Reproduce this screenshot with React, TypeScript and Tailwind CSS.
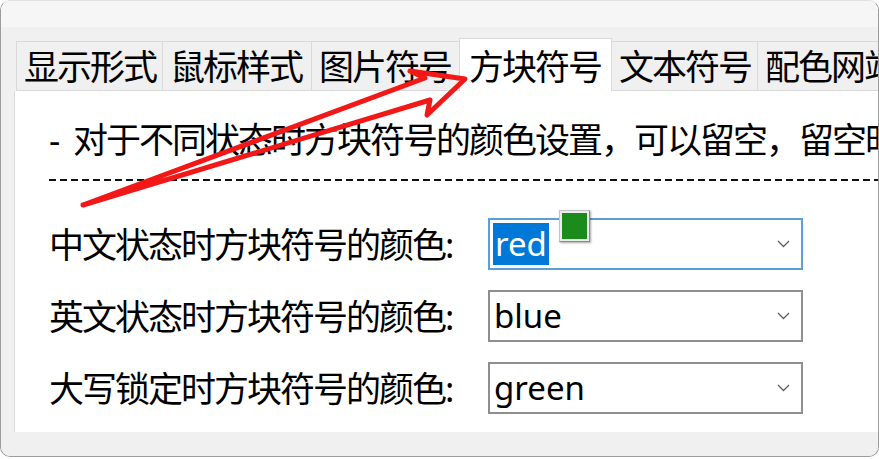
const tabs = [
  { label: "显示形式", cls: "w-[147px] border-l" },
  { label: "鼠标样式", cls: "w-[149px]" },
  { label: "图片符号", cls: "w-[148px]" },
  { label: "方块符号", cls: "active" },
  { label: "文本符号", cls: "w-[146px]" },
  { label: "配色网站", cls: "w-[148px]" },
];

const rows = [
  { label: "中文状态时方块符号的颜色:", value: "red", focused: true },
  { label: "英文状态时方块符号的颜色:", value: "blue", focused: false },
  { label: "大写锁定时方块符号的颜色:", value: "green", focused: false },
];

function Chevron() {
  return (
    <svg width="13" height="8" viewBox="0 0 13 8" className="ml-auto shrink-0">
      <polyline points="1,1 6.5,6.5 12,1" fill="none" stroke="#5f5f5f" strokeWidth="1.3" />
    </svg>
  );
}

function Combo({ value, focused }: { value: string; focused: boolean }) {
  return (
    <div
      className={
        focused
          ? "relative flex h-[52px] w-[315px] shrink-0 items-center border-2 border-[#5b9fd9] bg-white pl-[3px] pr-[11px]"
          : "relative flex h-[52px] w-[315px] shrink-0 items-center border-2 border-[#8f8f8f] bg-white pl-[4px] pr-[11px]"
      }
    >
      {focused ? (
        <span className="bg-[#0078d7] px-[2px] text-[33px] leading-[42px] text-white">{value}</span>
      ) : (
        <span className="text-[33px] leading-[42px]">{value}</span>
      )}
      {focused && (
        <div className="absolute -top-[10px] left-[69px] h-[32px] w-[31px] border border-[#c4c4c4] border-b-[#8a8a8a] border-r-[#8a8a8a] bg-[#ececec] p-[2px] shadow-[1px_1px_2px_rgba(0,0,0,0.35)]">
          <div className="h-full w-full bg-[#1b8c1b]" />
        </div>
      )}
      <Chevron />
    </div>
  );
}

export default function App() {
  return (
    <div className="relative h-[459px] w-[879px] bg-white font-['Noto_Sans','Noto_Sans_CJK_SC',sans-serif] text-black">
      <div className="flex h-[457px] flex-col overflow-hidden rounded-[10px] border border-[#9c9c9c] border-t-[#e2e2e2] bg-[#f0f0f0]">
        <div className="h-[26px] shrink-0 bg-[#f6f6f6]" />
        <div className="flex min-h-0 flex-1 flex-col pl-[13px] pt-[11px]">
          {/* tab strip */}
          <div className="flex h-[53px] shrink-0 items-end overflow-hidden pl-[2px]">
            {tabs.map((t) =>
              t.cls === "active" ? (
                <div
                  key={t.label}
                  className="-ml-[1px] flex h-[53px] w-[153px] shrink-0 items-center whitespace-nowrap border-x border-t border-[#d9d9d9] bg-white pl-[9px] pt-[3px] text-[35px] leading-none tracking-[-2px]"
                >
                  {t.label}
                </div>
              ) : (
                <div
                  key={t.label}
                  className={`flex h-[50px] shrink-0 items-center whitespace-nowrap border-y border-r border-[#d9d9d9] bg-[#f0f0f0] pl-[7px] text-[35px] leading-none tracking-[-2px] ${t.cls}`}
                >
                  {t.label}
                </div>
              )
            )}
          </div>

          {/* page */}
          <div className="min-h-0 flex-1 overflow-hidden border-l border-[#d9d9d9] bg-white pl-[34px]">
            <p className="mt-[26px] flex h-[46px] items-center whitespace-nowrap text-[35px] leading-[46px] tracking-[-2px]">
              <span className="w-[24px] shrink-0">-</span>
              <span>对于不同状态时方块符号的颜色设置，可以留空，留空时使用默认颜色</span>
            </p>
            <div className="mt-[16px] h-[2px] bg-[repeating-linear-gradient(90deg,#111_0_7px,transparent_7px_11px)]" />
            <div className="mt-[37px] flex flex-col gap-[20px]">
              {rows.map((r) => (
                <div key={r.label} className="flex h-[52px] items-center">
                  <span className="w-[439px] shrink-0 whitespace-nowrap text-[35px] leading-none tracking-[-2px]">{r.label}</span>
                  <Combo value={r.value} focused={r.focused} />
                </div>
              ))}
            </div>
          </div>
        </div>
        <div className="h-[24px] shrink-0 bg-[#f0f0f0]" />
      </div>

      {/* annotation arrow */}
      <svg width="879" height="459" viewBox="0 0 879 459" className="pointer-events-none absolute left-0 top-0">
        <polyline
          points="83,205 425,78 410,71 465,79 427,115 430,100 83,205"
          fill="none"
          stroke="#f21818"
          strokeWidth="5"
          strokeLinejoin="round"
          strokeLinecap="round"
        />
      </svg>
    </div>
  );
}
